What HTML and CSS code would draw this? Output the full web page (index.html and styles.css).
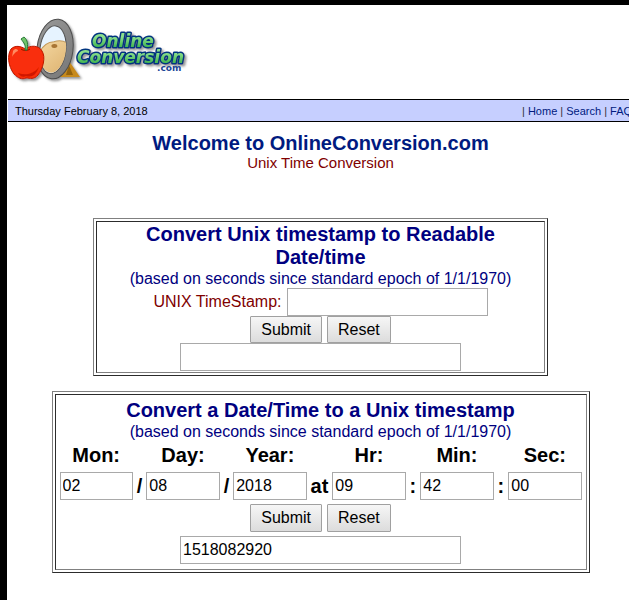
FILE: index.html
```html
<!doctype html>
<html lang="en">
<head>
	<meta charset="utf-8">
	<title>Unix Time Conversion</title>
	<link rel="stylesheet" href="styles.css">
</head>
<body>
	<header class="masthead">
		<svg class="logo" width="180" height="70" viewBox="0 0 180 70" role="img" aria-label="Online Conversion .com">
			<defs>
				<linearGradient id="rim" x1="0" y1="0" x2="1" y2="1">
					<stop offset="0" stop-color="#999"/>
					<stop offset="1" stop-color="#777"/>
				</linearGradient>
				<linearGradient id="orange" x1="0" y1="0" x2="1" y2="1">
					<stop offset="0" stop-color="#f5d9a4"/>
					<stop offset="1" stop-color="#dcb06c"/>
				</linearGradient>
				<linearGradient id="green" x1="0" y1="0" x2="0" y2="1">
					<stop offset="0.3" stop-color="#8be08b"/>
					<stop offset="1" stop-color="#27a53a"/>
				</linearGradient>
				<clipPath id="glass"><ellipse cx="45" cy="32" rx="13" ry="23"/></clipPath>
				<filter id="shadow" x="-10%" y="-10%" width="125%" height="125%">
					<feDropShadow dx="2" dy="2" stdDeviation="1" flood-color="#555" flood-opacity="0.6"/>
				</filter>
			</defs>
			<g filter="url(#shadow)">
				<path d="M61 43 L72 59 L52 59 Z" fill="#c78a1c"/>
				<path d="M61 47 L65 57 L58 57 Z" fill="#936311"/>
				<g transform="rotate(7 47 31)">
					<ellipse cx="47" cy="31" rx="18" ry="30" fill="url(#rim)" stroke="#4d4d4d"/>
					<ellipse cx="45" cy="32" rx="13" ry="24" fill="#e6f3ff" stroke="#555"/>
					<g clip-path="url(#glass)">
						<path d="M30 42 C33 30 38 25 45 24 C51 21 57 22 62 26 L62 46 C58 57 52 58 43 58 C34 56 29 50 30 42 Z" fill="url(#orange)" stroke="#c39a5c"/>
					</g>
					<ellipse cx="46" cy="28" rx="3" ry="2" fill="#a87534" transform="rotate(-12 46 28)"/>
				</g>
				<path d="M17 31 C22 27 31 27 34 33 C38 39 35 51 30 57 C26 62 22 60 18 60 C14 62 10 60 6 56 C0 48 -1 37 3 31 C7 27 13 28 17 31 Z" fill="#f92f07" stroke="#bd1800"/>
				<path d="M5 33 C7 30 10 31 10 33 C7 34 5 37 4 39 Z" fill="#ff8b62"/>
				<path d="M10 55 C17 58 26 56 31 49 C28 56 25 60 18 58 C15 60 12 58 10 55 Z" fill="#cf1600"/>
				<path d="M13 31 C16 33 19 33 22 31" fill="none" stroke="#8c1300"/>
				<path d="M17 32 C18 27 16 25 13 21 L16 19 C20 22 20 27 19 32 Z" fill="#70c46b" stroke="#287b38"/>
			</g>
			<g class="logo-text" filter="url(#shadow)">
				<text x="84" y="29">Online</text>
				<text x="69" y="45">Conversion</text>
			</g>
			<text class="logo-com" x="149" y="53">.com</text>
		</svg>
	</header>

	<div class="bar">
		<span class="date">Thursday February 8, 2018</span>
		<nav class="links">
			| <a href="#">Home</a> | <a href="#">Search</a> | <a href="#">FAQ</a> |
		</nav>
	</div>

	<main class="content">
		<h1 class="welcome">Welcome to OnlineConversion.com</h1>
		<div class="subject">Unix Time Conversion</div>

		<form class="box box-stamp">
			<div class="cell">
				<h2 class="title">Convert Unix timestamp to Readable Date/time</h2>
				<div class="note">(based on seconds since standard epoch of 1/1/1970)</div>
				<div class="row">
					<label class="stamp-label" for="stamp">UNIX TimeStamp:</label>
					<input class="field stamp" type="text" id="stamp">
				</div>
				<div class="row">
					<button type="submit" class="button">Submit</button>
					<button type="reset" class="button">Reset</button>
				</div>
				<input class="field result" type="text" aria-label="Readable date">
			</div>
		</form>

		<form class="box box-date">
			<div class="cell">
				<h2 class="title">Convert a Date/Time to a Unix timestamp</h2>
				<div class="note">(based on seconds since standard epoch of 1/1/1970)</div>
				<div class="parts">
					<div class="part"><label for="mon">Mon:</label><input class="field" type="text" id="mon" value="02"></div>
					<span class="sep">/</span>
					<div class="part"><label for="day">Day:</label><input class="field" type="text" id="day" value="08"></div>
					<span class="sep">/</span>
					<div class="part"><label for="year">Year:</label><input class="field" type="text" id="year" value="2018"></div>
					<span class="sep">at</span>
					<div class="part"><label for="hr">Hr:</label><input class="field" type="text" id="hr" value="09"></div>
					<span class="sep">:</span>
					<div class="part"><label for="min">Min:</label><input class="field" type="text" id="min" value="42"></div>
					<span class="sep">:</span>
					<div class="part"><label for="sec">Sec:</label><input class="field" type="text" id="sec" value="00"></div>
				</div>
				<div class="row">
					<button type="submit" class="button">Submit</button>
					<button type="reset" class="button">Reset</button>
				</div>
				<input class="field result" type="text" aria-label="Unix timestamp" value="1518082920">
			</div>
		</form>
	</main>
</body>
</html>
```

FILE: styles.css
```css
* {
	box-sizing: border-box;
}
html {
	background: #fff;
}
body {
	margin: 0;
	min-height: 100vh;
	border: solid #000;
	border-width: 5px 0 0 7px;
	padding-left: 1px;
	overflow: hidden;
	font: 16px "Liberation Sans", Arial, sans-serif;
	color: #000;
}
.masthead {
	padding: 13px 0 11px;
}
.logo {
	display: block;
	overflow: visible;
}
.logo-text {
	font: italic bold 17px "DejaVu Sans", Verdana, sans-serif;
	fill: url(#green);
	stroke: #06357f;
	stroke-width: 3px;
	stroke-linejoin: round;
	paint-order: stroke;
}
.logo-com {
	font: bold 9px "DejaVu Sans", Verdana, sans-serif;
	fill: #1b4596;
}

.bar {
	display: flex;
	align-items: center;
	height: 23px;
	padding-left: 7px;
	border: solid #000;
	border-width: 1px 0;
	background: #c6cfff;
	font-size: 11px;
	white-space: nowrap;
}
.date {
	flex: 1;
}
/* the last links run past the edge in a narrow window */
.links {
	flex: 0 0 107px;
	min-width: 0;
	color: #333;
}
.links a {
	color: #001a80;
	text-decoration: none;
}

.content {
	display: flex;
	flex-direction: column;
	align-items: center;
	padding: 10px 0 0 4px;
	text-align: center;
}
.welcome,
.title {
	margin: 0;
	font-size: 20px;
	line-height: 23px;
	color: #000080;
}
.welcome {
	color: #001a80;
}
.subject {
	font-size: 15px;
	line-height: 16px;
	color: #800000;
}

.box {
	width: 100%;
	padding: 2px;
	border: 1px solid;
	border-color: #808080 #2c2c2c #2c2c2c #808080;
}
.box-stamp {
	max-width: 455px;
	margin-top: 47px;
}
.box-date {
	max-width: 538px;
	margin-top: 15px;
}
.cell {
	display: flex;
	flex-direction: column;
	align-items: center;
	padding: 1px;
	border: 1px solid;
	border-color: #2c2c2c #808080 #808080 #2c2c2c;
}
.box-date .cell {
	padding: 4px 4px 5px;
}
.box-stamp .title {
	padding: 0 20px;
}
.note {
	line-height: 19px;
	color: #000080;
}
.row {
	display: flex;
	align-items: center;
	justify-content: center;
	gap: 5px;
}
.box-date .row {
	margin: 4px 0;
}
.stamp-label {
	color: #800000;
}
.field {
	height: 28px;
	padding: 0 2px;
	border: 1px solid #a9a9a9;
	background: #fff;
	font: inherit;
}
.stamp {
	width: 201px;
}
.result {
	width: 281px;
}
.button {
	height: 27px;
	padding: 0 10px;
	border: 1px solid #a0a0a0;
	border-radius: 1px;
	background: linear-gradient(#f6f6f6, #dcdcdc);
	font: inherit;
}
.box-date .button {
	height: 28px;
}

.parts {
	display: flex;
	align-items: flex-end;
	width: 100%;
}
.part {
	flex: 1 1 73px;
	min-width: 0;
}
.part label,
.sep {
	display: block;
	font-size: 20px;
	font-weight: bold;
	line-height: 28px;
}
.part label {
	padding-bottom: 3px;
}
.part .field {
	display: block;
	width: 100%;
}
.sep {
	flex: none;
	padding: 0 4px;
}
```
